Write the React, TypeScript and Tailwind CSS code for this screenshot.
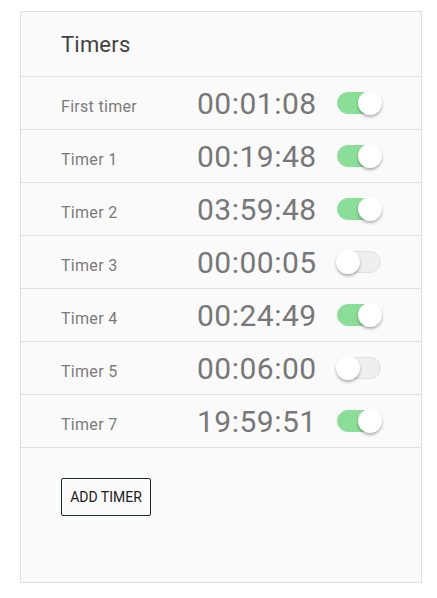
import React from "react";

const timers = [
  { name: "First timer", time: "00:01:08", on: true },
  { name: "Timer 1", time: "00:19:48", on: true },
  { name: "Timer 2", time: "03:59:48", on: true },
  { name: "Timer 3", time: "00:00:05", on: false },
  { name: "Timer 4", time: "00:24:49", on: true },
  { name: "Timer 5", time: "00:06:00", on: false },
  { name: "Timer 7", time: "19:59:51", on: true },
];

function Toggle({ on }: { on: boolean }) {
  return (
    <div
      className={
        on
          ? "relative w-[44px] h-[22px] rounded-full bg-[#8ade98] border border-[#8ade98]"
          : "relative w-[44px] h-[22px] rounded-full bg-[#efefef] border border-[#e0e0e0]"
      }
    >
      <div
        className={
          on
            ? "absolute top-[-2px] right-[-2px] w-[24px] h-[24px] rounded-full bg-white shadow-[0_2px_3px_rgba(0,0,0,0.3)]"
            : "absolute top-[-2px] left-[-2px] w-[24px] h-[24px] rounded-full bg-white shadow-[0_2px_3px_rgba(0,0,0,0.3)]"
        }
      />
    </div>
  );
}

export default function App() {
  return (
    <div className="w-[437px] h-[598px] bg-white pt-[11px] pl-[20px] font-['Roboto',sans-serif]">
      <div className="w-[402px] h-[572px] bg-[#fafafa] border border-[#e0e0e0] flex flex-col">
        <div className="h-[65px] border-b border-[#e0e0e0] flex items-center pl-[40px]">
          <span className="text-[22px] text-[#424242] tracking-[0.2px]">Timers</span>
        </div>
        {timers.map((t) => (
          <div key={t.name} className="h-[53px] border-b border-[#e0e0e0] flex items-center pl-[40px]">
            <span className="w-[136px] text-[16px] text-[#7a7a7a] tracking-[0.3px] pt-[7px]">{t.name}</span>
            <span className="w-[140px] text-[30px] text-[#777777] tracking-[0.5px] pt-[1px]">{t.time}</span>
            <Toggle on={t.on} />
          </div>
        ))}
        <div className="pl-[40px] pt-[30px]">
          <button className="w-[90px] h-[38px] border border-[#1f2a2a] rounded-[2px] text-[14px] text-[#212121] bg-transparent">
            ADD TIMER
          </button>
        </div>
      </div>
    </div>
  );
}
